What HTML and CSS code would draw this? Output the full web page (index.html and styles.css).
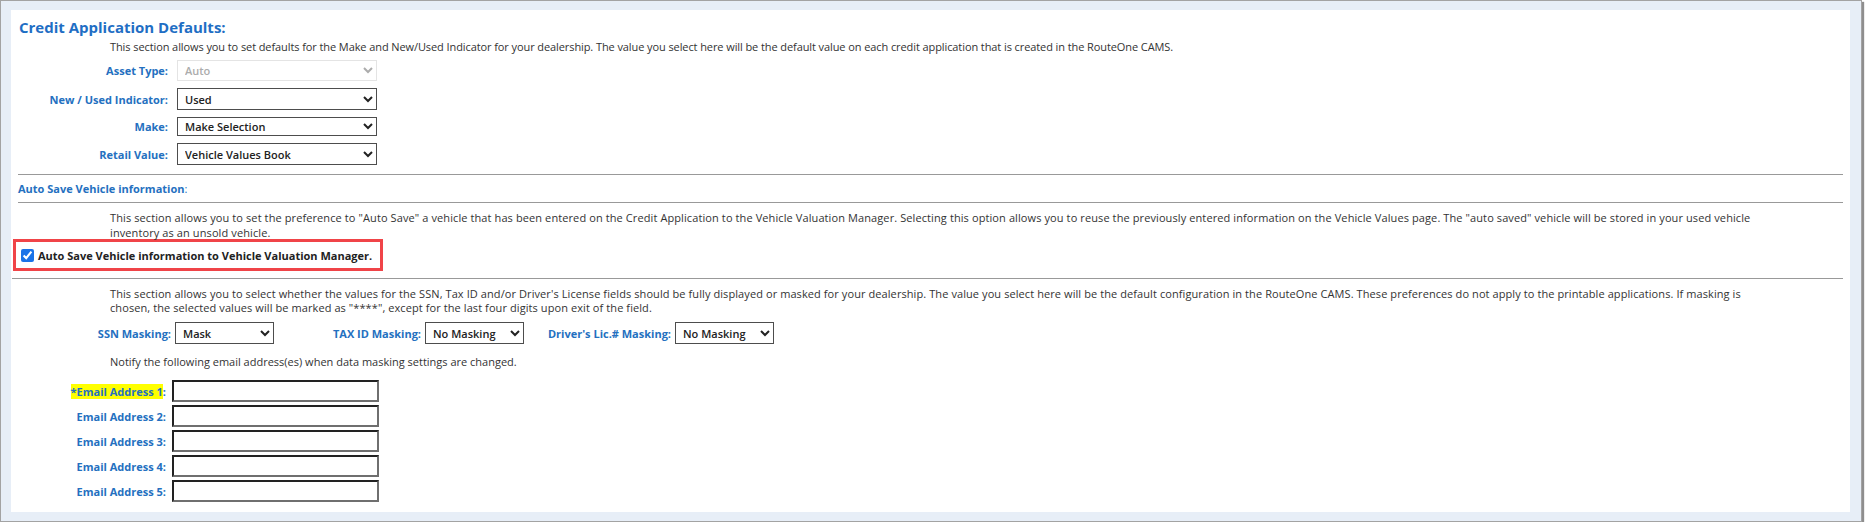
FILE: index.html
```html
<!DOCTYPE html>
<html lang="en">
<head>
    <meta charset="UTF-8">
    <title>Credit Application Defaults</title>
    <link rel="stylesheet" href="styles.css">
</head>
<body>
    <div class="frame">
        <div class="panel">
            <h1 class="title">Credit Application Defaults:</h1>
            <p class="desc desc-first">This section allows you to set defaults for the Make and New/Used Indicator for your dealership. The value you select here will be the default value on each credit application that is created in the RouteOne CAMS.</p>

            <div class="field-grid">
                <label class="lbl" for="assetType">Asset Type:</label>
                <select id="assetType" class="sel sel-asset" disabled><option>Auto</option></select>

                <label class="lbl" for="newUsed">New / Used Indicator:</label>
                <select id="newUsed" class="sel"><option>Used</option><option>New</option></select>

                <label class="lbl" for="make">Make:</label>
                <select id="make" class="sel sel-make"><option>Make Selection</option></select>

                <label class="lbl" for="retail">Retail Value:</label>
                <select id="retail" class="sel"><option>Vehicle Values Book</option></select>
            </div>

            <hr class="rule">
            <div class="section-head"><span class="lbl">Auto Save Vehicle information</span>:</div>
            <hr class="rule rule-tight">

            <p class="desc desc-loose">This section allows you to set the preference to "Auto Save" a vehicle that has been entered on the Credit Application to the Vehicle Valuation Manager. Selecting this option allows you to reuse the previously entered information on the Vehicle Values page. The "auto saved" vehicle will be stored in your used vehicle<br>inventory as an unsold vehicle.</p>

            <div class="autosave-box">
                <label class="check-label"><input type="checkbox" class="check" checked>Auto Save Vehicle information to Vehicle Valuation Manager.</label>
            </div>

            <hr class="rule rule-wide">

            <p class="desc desc-mask">This section allows you to select whether the values for the SSN, Tax ID and/or Driver's License fields should be fully displayed or masked for your dealership. The value you select here will be the default configuration in the RouteOne CAMS. These preferences do not apply to the printable applications. If masking is<br>chosen, the selected values will be marked as "****", except for the last four digits upon exit of the field.</p>

            <div class="mask-row">
                <div class="mask-group">
                    <label class="lbl" for="ssnMask">SSN Masking:</label>
                    <select id="ssnMask" class="sel sel-mask"><option>Mask</option><option>No Masking</option></select>
                </div>
                <div class="mask-group">
                    <label class="lbl" for="taxMask">TAX ID Masking:</label>
                    <select id="taxMask" class="sel sel-mask"><option>No Masking</option><option>Mask</option></select>
                </div>
                <div class="mask-group">
                    <label class="lbl" for="dlMask">Driver's Lic.# Masking:</label>
                    <select id="dlMask" class="sel sel-mask"><option>No Masking</option><option>Mask</option></select>
                </div>
            </div>

            <p class="desc desc-notify">Notify the following email address(es) when data masking settings are changed.</p>

            <div class="email-grid">
                <label class="lbl" for="email1"><span class="required">*Email Address 1</span>:</label>
                <input type="text" id="email1" class="email">
                <label class="lbl" for="email2">Email Address 2:</label>
                <input type="text" id="email2" class="email">
                <label class="lbl" for="email3">Email Address 3:</label>
                <input type="text" id="email3" class="email">
                <label class="lbl" for="email4">Email Address 4:</label>
                <input type="text" id="email4" class="email">
                <label class="lbl" for="email5">Email Address 5:</label>
                <input type="text" id="email5" class="email">
            </div>
        </div>
    </div>
</body>
</html>
```

FILE: styles.css
```css
body {
    margin: 0;
    background: #fff;
    font-family: 'Open Sans', 'DejaVu Sans', sans-serif;
    font-size: 11px;
    color: #333;
}
.frame {
    box-sizing: border-box;
    width: 1862px;
    height: 522px;
    padding: 9px 11px 9px 10px;
    background: #e7eef7;
    border: 1px solid #a3a3a3;
    box-shadow: 2px 2px 1px #8e8e8e;
}
.panel {
    background: #fff;
    height: 502px;
    box-sizing: border-box;
    padding: 7px 0 10px;
}
.title {
    margin: 0 0 0 8px;
    font-size: 15px;
    line-height: 20px;
    font-weight: 700;
    color: #1f6ec4;
}
.desc {
    margin: 3px 0 0 99px;
    max-width: 1720px;
    line-height: 14px;
    color: #333;
}
.desc-first {
    letter-spacing: -0.09px;
}
.desc-loose {
    margin-top: 7px;
    line-height: 15px;
    letter-spacing: 0.1px;
}
.desc-mask {
    margin-top: 8px;
    letter-spacing: 0.085px;
}
.desc-notify {
    margin-top: 11px;
}
.lbl {
    font-weight: 700;
    color: #2470c0;
    text-align: right;
}
.field-grid {
    display: grid;
    grid-template-columns: 157px 200px;
    column-gap: 9px;
    row-gap: 7px;
    align-items: center;
    margin-top: 6px;
}
.sel {
    box-sizing: border-box;
    height: 22px;
    padding: 0 3px;
    font-family: inherit;
    font-size: 11px;
    font-weight: 600;
    color: #222;
    background: #fff;
    border: 1px solid #4d4d4d;
    border-radius: 0;
}
.sel-asset {
    height: 21px;
    color: #8a8a8a;
    border-color: #d9d9d9;
}
.sel-make {
    height: 19px;
}
.rule {
    height: 0;
    border: 0;
    border-top: 1px solid #999;
    margin: 9px 7px 0 7px;
}
.rule-tight {
    margin-top: 6px;
}
.rule-wide {
    margin: 7px 7px 0 1px;
}
.section-head {
    margin: 7px 0 0 7px;
    line-height: 14px;
    color: #2470c0;
}
.autosave-box {
    box-sizing: border-box;
    width: 370px;
    height: 32px;
    margin: -1px 0 0 2px;
    padding-left: 5px;
    border: 3px solid #f04448;
    display: flex;
    align-items: center;
}
.check-label {
    display: flex;
    align-items: center;
    gap: 4px;
    font-weight: 700;
    color: #222;
}
.check {
    width: 13px;
    height: 13px;
    margin: 0;
    accent-color: #1a73e8;
}
.mask-row {
    display: grid;
    grid-template-columns: repeat(3, 250px);
    margin: 7px 0 0 13px;
}
.mask-group {
    display: grid;
    grid-template-columns: 147px 99px;
    column-gap: 4px;
    align-items: center;
}
.email-grid {
    display: grid;
    grid-template-columns: 155px 207px;
    column-gap: 6px;
    row-gap: 3px;
    align-items: center;
    margin-top: 11px;
}
.email {
    box-sizing: border-box;
    height: 22px;
    margin: 0;
    padding: 0 4px;
    font-family: inherit;
    font-size: 11px;
    background: #fff;
    border: 2px solid;
    border-color: #222 #6f6f6f #6f6f6f #222;
    border-radius: 0;
}
.required {
    background: #ffff00;
}
```
